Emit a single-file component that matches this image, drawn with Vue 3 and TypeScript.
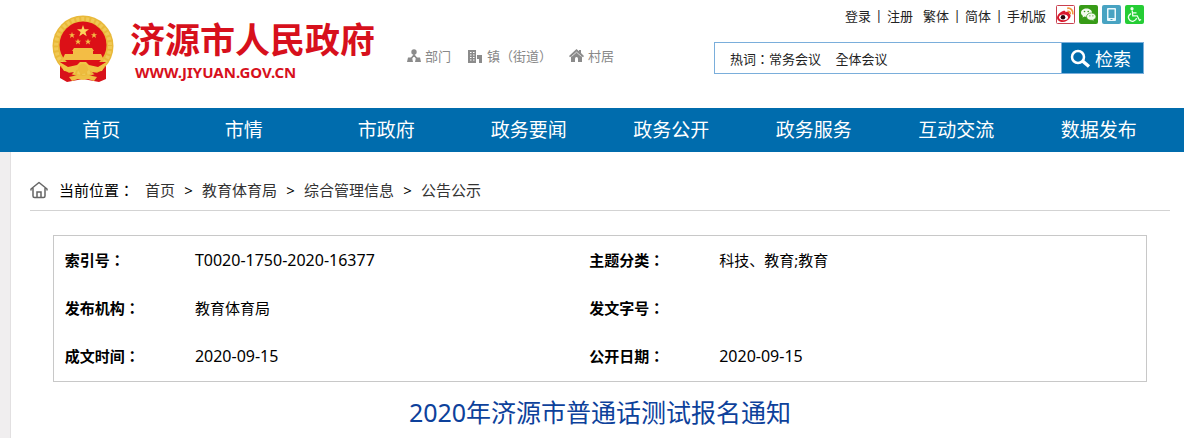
<script setup lang="ts">
import { ref } from 'vue'

interface InfoRow {
  label: string
  value: string
  label2: string
  value2: string
}

const keyword = ref('热词：常务会议     全体会议')
const navItems: string[] = ['首页', '市情', '市政府', '政务要闻', '政务公开', '政务服务', '互动交流', '数据发布']
const crumbs: string[] = ['首页', '教育体育局', '综合管理信息', '公告公示']
const rows: InfoRow[] = [
  { label: '索引号', value: 'T0020-1750-2020-16377', label2: '主题分类', value2: '科技、教育;教育' },
  { label: '发布机构', value: '教育体育局', label2: '发文字号', value2: '' },
  { label: '成文时间', value: '2020-09-15', label2: '公开日期', value2: '2020-09-15' },
]

const isCode = (text: string): boolean => /^[\w-]+$/.test(text)
</script>

<template>
  <div class="page">
    <header class="header">
      <a class="brand" href="#">
        <svg class="emblem" viewBox="0 0 62 68" aria-hidden="true">
          <path d="M8 46 L54 46 L54 64 L47 67 L31 64 L15 67 L8 63Z" fill="#d8121a" />
          <circle cx="31" cy="31" r="30.5" fill="#e9b93a" />
          <circle cx="31" cy="31" r="27" fill="none" stroke="#f0c955" stroke-width="4" stroke-dasharray="3 2" />
          <circle cx="31" cy="30" r="23.5" fill="#dc1017" />
          <path d="M31 10l1.500 4.300h4.500l-3.600 2.700 1.300 4.300-3.700-2.600-3.700 2.600 1.300-4.300-3.600-2.700h4.500z" fill="#fbd45c" />
          <g fill="#f3bd45">
            <path d="M20 17l.8 2.200h2.300l-1.800 1.400.7 2.300-2-1.400-2 1.400.7-2.300-1.800-1.400h2.300z" />
            <path d="M42 17l.8 2.200h2.300l-1.800 1.400.7 2.300-2-1.400-2 1.400.7-2.300-1.800-1.400h2.300z" />
            <path d="M26 23.500l.8 2.200h2.300l-1.800 1.400.7 2.300-2-1.400-2 1.400.7-2.300-1.800-1.400h2.300z" />
            <path d="M36 23.500l.8 2.200h2.300l-1.800 1.400.7 2.300-2-1.400-2 1.400.7-2.300-1.800-1.400h2.300z" />
            <path d="M22 33h18l2 3h-1v3h8l3 6H10l3-6h8v-3h-1z" />
          </g>
          <path d="M8 47h46l-2 6H10z" fill="#dc1017" />
          <path d="M6 46l10 6 9-2 3-3h6l3 3 9 2 10-6-6 10-9 1-6-3h-8l-6 3-9-1z" fill="#f0c445" />
          <circle cx="31" cy="54" r="5" fill="#edbb3e" />
          <path d="M8 56l8 2 6-1-6 6-8-1zM54 56l-8 2-6-1 6 6 8-1z" fill="#d8121a" />
          <path d="M17 62l9-2 5 1 5-1 9 2-3 4-6-2-5 1-5-1-6 2z" fill="#efc043" />
        </svg>
        <span class="brand-text">
          <span class="brand-name">济源市人民政府</span>
          <span class="brand-url">WWW.JIYUAN.GOV.CN</span>
        </span>
      </a>

      <nav class="sites" aria-label="站点">
        <a href="#">
          <svg width="14" height="14" viewBox="0 0 14 14" aria-hidden="true">
            <path d="M7 4v4M7 6L3 11M7 6l4 5" stroke="#8b8b8b" stroke-width="1.500" fill="none" />
            <circle cx="7" cy="3" r="2.700" fill="#8b8b8b" />
            <path d="M1 8.500h4l1 4.500H0zM9 8.500h4l1 4.500H8z" fill="#8b8b8b" />
          </svg>部门
        </a>
        <a href="#">
          <svg width="15" height="14" viewBox="0 0 15 14" aria-hidden="true">
            <path d="M0 1h8v5h6v8h-3v-4h-2v4H0z" fill="#8b8b8b" />
            <path d="M2 3.500h1.500M5 3.500h1.500M2 6h1.500M5 6h1.500M2 8.500h1.500M5 8.500h1.500M2 11h1.500M5 11h1.500" stroke="#fff" stroke-width="1" />
            <path d="M8.500 6v8" stroke="#fff" stroke-width="1" />
          </svg>镇（街道）
        </a>
        <a href="#">
          <svg width="15" height="14" viewBox="0 0 15 14" aria-hidden="true">
            <path d="M7.500 0L10 2.200V1h2v3l3 3-1 1.200-1-.8V13H2V7.400l-1 .8L0 7z" fill="#8b8b8b" />
            <path d="M2.500 7.500l5-4.300 5 4.300" stroke="#fff" stroke-width=".7" fill="none" />
            <path d="M6 13V9.500a1.500 1.500 0 0 1 3 0V13z" fill="#fff" />
          </svg>村居
        </a>
      </nav>

      <div class="tools">
        <div class="quick">
          <a href="#">登录</a><i>|</i><a href="#">注册</a>
          <a class="second" href="#">繁体</a><i>|</i><a href="#">简体</a><i>|</i><a href="#">手机版</a>
          <span class="social">
            <a href="#" aria-label="微博">
              <svg viewBox="0 0 19 19">
                <rect x=".5" y=".5" width="18" height="18" rx="1" fill="#fff" stroke="#c9404f" />
                <path d="M7 6c1.500-.8 2.800-.2 2.500 1.300 2-.9 4-.5 3.600 1.300 1.700.6 2 2.500 1 4C12.300 16 8.500 17.500 5.500 17 .8 16 0 12.500 2.200 9.500 3.800 7.500 5.600 6.500 7 6z" fill="#d8182c" />
                <ellipse cx="7.500" cy="12.300" rx="4.500" ry="2.900" fill="#fff" />
                <circle cx="7" cy="12.300" r="2.300" fill="#26060a" />
                <path d="M11.500 6.300c1.700-.3 3 1 2.700 2.700M11.200 3.300c3.500-.6 6.300 2.200 5.600 6" stroke="#f1973a" stroke-width="1.700" fill="none" />
              </svg>
            </a>
            <a href="#" aria-label="微信">
              <svg viewBox="0 0 19 19">
                <rect width="19" height="19" rx="2" fill="#379b17" />
                <path d="M7.500 3.500C4.500 3.500 2 5.300 2 7.700c0 1.300.8 2.500 2 3.200L3.500 12.600l2-1c3.600.9 7.500-.8 7.500-3.900 0-2.400-2.500-4.200-5.500-4.200z" fill="#f4faef" />
                <path d="M12.300 8c-2.600 0-4.800 1.500-4.800 3.700 0 2.400 2.800 4 5.700 3.500l2 1-.5-1.600c1.400-.7 2.300-1.700 2.300-2.900C17 9.500 14.900 8 12.300 8z" fill="#f4faef" stroke="#379b17" stroke-width=".7" />
                <g fill="#379b17"><circle cx="5.500" cy="6.500" r=".8" /><circle cx="9.200" cy="6.500" r=".8" /><circle cx="10.900" cy="10.800" r=".6" /><circle cx="13.900" cy="10.800" r=".6" /></g>
              </svg>
            </a>
            <a href="#" aria-label="手机">
              <svg viewBox="0 0 19 19">
                <rect width="19" height="19" rx="2" fill="#48a3c2" />
                <rect x="5" y="3" width="9" height="13" rx="1" fill="#eaf8fc" />
                <rect x="6.500" y="4.500" width="6" height="8.500" fill="#48a3c2" />
                <rect x="8.500" y="14" width="2" height="1" fill="#48a3c2" />
              </svg>
            </a>
            <a href="#" aria-label="无障碍">
              <svg viewBox="0 0 19 19">
                <rect width="19" height="19" rx="2" fill="#25cd35" />
                <circle cx="7" cy="3.700" r="1.600" fill="#effff0" />
                <path d="M7.200 5.500l.6 5.300h4.400l2.300 4.500 1.600-.8M7.600 7.800h3.900M6 8.600c-5 2.800-1.800 8.600 2.500 7.500 1.700-.4 2.800-1.500 3.100-2.900" stroke="#effff0" stroke-width="1.300" fill="none" />
              </svg>
            </a>
          </span>
        </div>
        <form class="search" @submit.prevent>
          <input v-model="keyword" type="text" aria-label="热词">
          <button type="submit">
            <svg width="21" height="19" viewBox="0 0 21 19" aria-hidden="true">
              <circle cx="8" cy="8" r="6" fill="none" stroke="#fff" stroke-width="2.500" />
              <path d="M12.500 12l6.500 5.500" stroke="#fff" stroke-width="3.500" />
            </svg>检索
          </button>
        </form>
      </div>
    </header>

    <nav class="menu" aria-label="主导航">
      <a v-for="item in navItems" :key="item" href="#">{{ item }}</a>
    </nav>

    <main class="content">
      <div class="crumbs">
        <svg width="18" height="18" viewBox="0 0 18 18" aria-hidden="true">
          <path d="M1 9V8l8-6.500L17 8v1M3 7.500V15q0 1.500 1.500 1.500h9q1.500 0 1.500-1.500V7.500" fill="none" stroke="#666" stroke-width="1.500" stroke-linejoin="round" stroke-linecap="round" />
          <path d="M7 16v-5h4v5" fill="none" stroke="#666" stroke-width="1.500" />
        </svg>
        <span class="here">当前位置<span class="colon">：</span></span>
        <template v-for="(crumb, index) in crumbs" :key="crumb">
          <span v-if="index > 0" class="arrow">&gt;</span>
          <a href="#">{{ crumb }}</a>
        </template>
      </div>

      <div class="info">
        <table>
          <colgroup>
            <col class="col-label"><col class="col-value"><col class="col-label"><col>
          </colgroup>
          <tbody>
            <tr v-for="row in rows" :key="row.label">
              <th scope="row">{{ row.label }}<span class="colon">：</span></th>
              <td :class="{ code: isCode(row.value) }">{{ row.value }}</td>
              <th scope="row">{{ row.label2 }}<span class="colon">：</span></th>
              <td :class="{ code: isCode(row.value2) }">{{ row.value2 }}</td>
            </tr>
          </tbody>
        </table>
      </div>

      <h1>2020年济源市普通话测试报名通知</h1>
    </main>
  </div>
</template>

<style>
body {
  margin: 0;
  background: #fff;
}
</style>

<style scoped>
.page {
  display: flex;
  flex-direction: column;
  min-height: 100vh;
  font-family: "Noto Sans", "Noto Sans CJK SC", sans-serif;
  font-size: 15px;
  color: #000;
}
a {
  color: inherit;
  text-decoration: none;
}
.header {
  display: flex;
  box-sizing: border-box;
  min-height: 108px;
  padding: 0 40px 0 52px;
}
.brand {
  display: flex;
  align-items: flex-start;
  gap: 16px;
  padding-top: 15px;
  color: #d7101c;
  font-weight: 700;
}
.emblem {
  width: 62px;
  height: 68px;
}
.brand-text {
  display: flex;
  flex-direction: column;
  padding-top: 5px;
}
.brand-name {
  font-size: 35px;
  line-height: 40px;
  white-space: nowrap;
}
.brand-url {
  padding-left: 5px;
  font-size: 15px;
  line-height: 24px;
}
.sites {
  display: flex;
  align-items: center;
  align-self: flex-start;
  gap: 17px;
  margin-left: 32px;
  padding-top: 46px;
  font-size: 13px;
  line-height: 20px;
  color: #888;
  white-space: nowrap;
}
.sites a {
  display: flex;
  align-items: center;
  gap: 4px;
}
.tools {
  width: 430px;
  margin-left: auto;
}
.quick {
  display: flex;
  align-items: center;
  justify-content: flex-end;
  height: 30px;
  font-size: 13px;
  color: #222;
  white-space: nowrap;
}
.quick i {
  width: 16px;
  font-style: normal;
  text-align: center;
}
.quick .second {
  margin-left: 10px;
}
.social {
  display: flex;
  gap: 4px;
  margin: 0 0 2px 10px;
}
.social svg {
  display: block;
  width: 19px;
  height: 19px;
}
.search {
  display: flex;
  box-sizing: border-box;
  height: 32px;
  margin-top: 12px;
  border: 1px solid #7aaedb;
}
.search input {
  flex: 1;
  min-width: 0;
  padding: 0 15px;
  border: 0;
  outline: 0;
  background: #fff;
  font-family: "Noto Sans CJK TC", sans-serif;
  font-size: 13px;
  color: #222;
}
.search button {
  display: flex;
  align-items: center;
  gap: 4px;
  width: 82px;
  padding: 0 8px;
  border: 0;
  border-left: 1px solid #7aaedb;
  background: #006cad;
  font-family: inherit;
  font-size: 18px;
  color: #fff;
  white-space: nowrap;
}
.search svg {
  flex: none;
}
.menu {
  display: grid;
  grid-template-columns: repeat(8, 1fr);
  padding: 0 14px 0 30px;
  background: #006cad;
  font-size: 19px;
  line-height: 44px;
  color: #fff;
  text-align: center;
}
.content {
  flex: 1;
  margin: 0 0 0 10px;
  padding: 0 14px 0 19px;
  border-left: 1px solid #e2e0e1;
  box-shadow: -10px 0 0 #f0eeef;
}
.crumbs {
  display: flex;
  align-items: center;
  height: 59px;
  padding-top: 17px;
  box-sizing: border-box;
  border-bottom: 1px solid #d3d3d3;
  color: #333;
  white-space: nowrap;
}
.crumbs .here {
  margin: 0 11px;
  color: #000;
}
.arrow {
  width: 27px;
  text-align: center;
  color: #000;
}
.colon {
  font-family: "Noto Sans CJK TC", sans-serif;
}
.info {
  width: 96%;
  box-sizing: border-box;
  margin: 24px auto 0;
  padding-bottom: 1px;
  border: 1px solid #c8c8c8;
}
table {
  width: 100%;
  border-collapse: collapse;
  table-layout: fixed;
}
.col-label {
  width: 12%;
}
.col-value {
  width: 36%;
}
th,
td {
  height: 48px;
  padding: 0 0 0 11px;
  line-height: 24px;
  text-align: left;
}
td {
  padding-left: 10px;
}
td.code {
  font-size: 16px;
}
h1 {
  margin: 10px 0 0;
  font-size: 25px;
  font-weight: 400;
  line-height: 40px;
  text-align: center;
  color: #0d419b;
}
</style>
